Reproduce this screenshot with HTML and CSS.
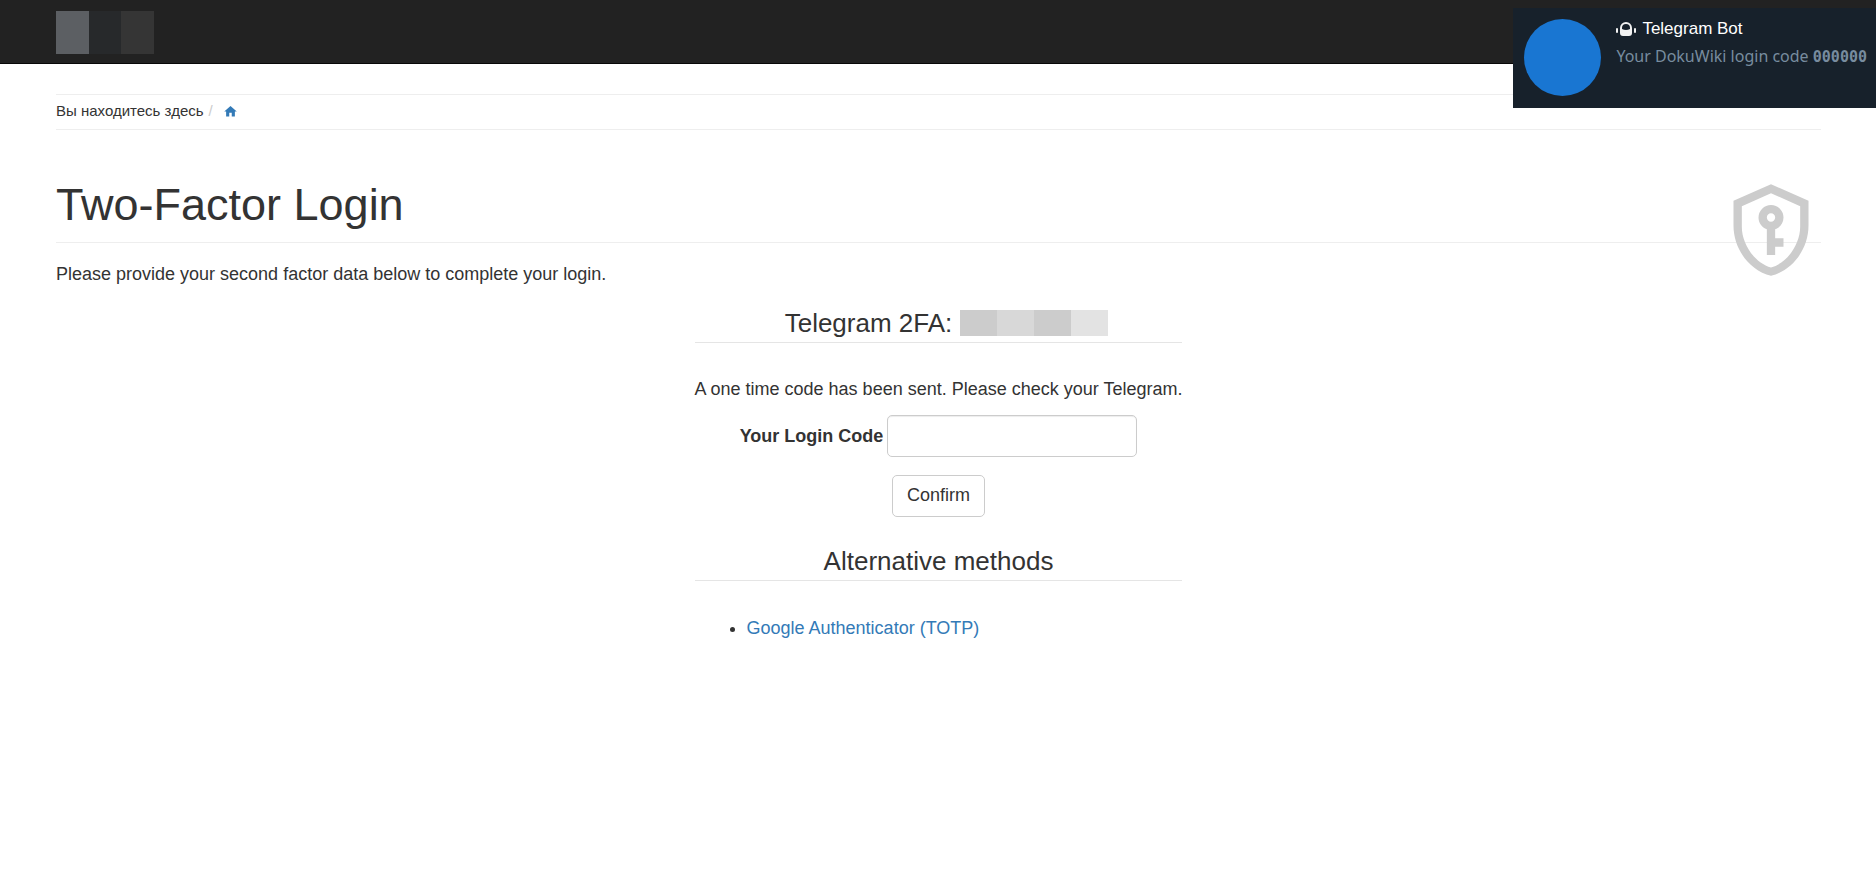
FILE: index.html
```html
<!DOCTYPE html>
<html lang="ru">
<head>
<meta charset="utf-8">
<meta name="viewport" content="width=device-width, initial-scale=1">
<title>Two-Factor Login</title>
<link rel="stylesheet" href="styles.css">
</head>
<body>
<header class="navbar">
  <div class="brand" aria-hidden="true"><span class="brand-a"></span><span class="brand-b"></span><span class="brand-c"></span></div>
</header>
<div class="container">
  <nav class="breadcrumb">
    <span>Вы находитесь здесь</span>
    <span class="separator">/</span>
    <a class="home" href="#" aria-label="Home">
      <svg viewBox="0 0 24 24"><path d="M10 20v-6h4v6h5v-8h3L12 3 2 12h3v8z"/></svg>
    </a>
  </nav>
  <main>
    <div class="page-head">
      <h1>Two-Factor Login</h1>
      <svg class="shield" viewBox="0 0 24 24"><path d="M21,11C21,16.55 17.16,21.74 12,23C6.84,21.74 3,16.55 3,11V5L12,1L21,5V11M12,21C15.75,20 19,15.54 19,11.22V6.3L12,3.18L5,6.3V11.22C5,15.54 8.25,20 12,21M12,6A3,3 0 0,1 15,9C15,10.31 14.17,11.42 13,11.83V14H15V16H13V18H11V11.83C9.83,11.42 9,10.31 9,9A3,3 0 0,1 12,6M12,8A1,1 0 0,0 11,9A1,1 0 0,0 12,10A1,1 0 0,0 13,9A1,1 0 0,0 12,8Z"/></svg>
    </div>
    <p class="intro">Please provide your second factor data below to complete your login.</p>
    <form class="login">
      <h2 class="provider">Telegram 2FA: <span class="account" aria-hidden="true"><span class="tone-a"></span><span class="tone-b"></span><span class="tone-a"></span><span class="tone-c"></span></span></h2>
      <p class="notice">A one time code has been sent. Please check your Telegram.</p>
      <div class="field">
        <label for="code">Your Login Code</label>
        <input id="code" type="text" autocomplete="off">
      </div>
      <button class="confirm" type="submit">Confirm</button>
      <h2>Alternative methods</h2>
      <ul class="methods"><li><a href="#">Google Authenticator (TOTP)</a></li></ul>
    </form>
  </main>
</div>
<aside class="toast">
  <span class="avatar"></span>
  <div class="toast-body">
    <div class="toast-title">
      <svg class="bot" viewBox="0 0 20 14"><path fill-rule="evenodd" d="M4 6a6 6 0 0 1 12 0v5q0 3-3 3H7q-3 0-3-3zM6 7q4 2 8 0V6a4 4 0 0 0-8 0z"/><rect x="0" y="6" width="2" height="5" rx="1"/><rect x="18" y="6" width="2" height="5" rx="1"/></svg>
      <span>Telegram Bot</span>
    </div>
    <div class="toast-text">Your DokuWiki login code <code>000000</code></div>
  </div>
</aside>
</body>
</html>
```
FILE: styles.css
```css
* {
  box-sizing: border-box;
}

body {
  margin: 0;
  background: #fff;
  color: #333;
  font: 18px/26px "Liberation Sans", Arial, sans-serif;
}

a {
  color: #337ab7;
  text-decoration: none;
}

h1,
h2,
p,
ul {
  margin: 0;
}

.navbar {
  display: flex;
  align-items: center;
  height: 64px;
  padding: 0 56px;
  background: #222;
  border-bottom: 1px solid #080808;
}

.brand {
  display: flex;
  height: 43px;
  margin-top: 2px;
}

.brand span {
  width: 33px;
}

.brand .brand-b {
  width: 32px;
}

.brand-a { background: #5c5f63; }
.brand-b { background: #27292b; }
.brand-c { background: #353535; }

.container {
  padding: 30px 55px 40px 56px;
}

.breadcrumb {
  display: flex;
  align-items: center;
  height: 36px;
  padding-bottom: 2px;
  border-top: 1px solid #eee;
  border-bottom: 1px solid #eee;
  font-size: 15px;
}

.separator {
  margin: 0 10px 0 5px;
  color: #ccc;
}

.home svg {
  display: block;
  width: 15px;
  height: 15px;
  fill: #337ab7;
}

.page-head {
  display: flex;
  justify-content: space-between;
  height: 63px;
  margin-top: 50px;
  border-bottom: 1px solid #eee;
}

h1 {
  font-size: 45px;
  font-weight: 400;
  line-height: 50px;
}

.shield {
  flex: none;
  width: 100px;
  height: 100px;
  fill: #ccc;
}

.intro {
  margin-top: 18px;
}

.login {
  display: flex;
  flex-direction: column;
  align-items: center;
  width: fit-content;
  margin: 22px auto 0;
}

h2 {
  align-self: stretch;
  padding-bottom: 5px;
  border-bottom: 1px solid #e5e5e5;
  font-size: 26px;
  font-weight: 400;
  line-height: 28px;
  text-align: center;
}

.provider {
  display: flex;
  justify-content: center;
  align-items: center;
  gap: 8px;
  padding-left: 16px;
}

.account {
  display: flex;
  height: 26px;
}

.account span {
  width: 37px;
}

.tone-a { background: #ccc; }
.tone-b { background: #d8d8d8; }
.tone-c { background: #e3e3e3; }

.notice {
  margin-top: 33px;
}

.field {
  display: flex;
  align-items: center;
  gap: 4px;
  margin-top: 13px;
}

label {
  font-weight: 700;
}

input {
  width: 250px;
  height: 42px;
  padding: 8px 15px;
  border: 1px solid #ccc;
  border-radius: 5px;
  box-shadow: inset 0 1px 1px rgba(0, 0, 0, 0.075);
  color: #555;
  font: inherit;
}

.confirm {
  height: 42px;
  margin: 18px 0 30px;
  padding: 0 14px 3px;
  border: 1px solid #ccc;
  border-radius: 5px;
  background: #fff;
  color: #333;
  font: inherit;
}

.methods {
  align-self: stretch;
  margin-top: 34px;
  padding-left: 52px;
}

.toast {
  position: absolute;
  top: 8px;
  right: 0;
  display: flex;
  gap: 15px;
  height: 100px;
  padding: 11px 9px 11px 11px;
  background: #17212b;
}

.avatar {
  width: 77px;
  height: 77px;
  border-radius: 50%;
  background: #1976d2;
}

.toast-title {
  display: flex;
  align-items: center;
  gap: 6px;
  height: 20px;
  color: #fff;
  font-size: 17px;
}

.bot {
  width: 20px;
  height: 14px;
  fill: #f2f2f2;
}

.toast-text {
  margin-top: 5px;
  color: #788c9f;
  font: 16px/24px "Noto Sans", "Open Sans", sans-serif;
}

code {
  font: 700 15px "DejaVu Sans Mono", monospace;
}
```
